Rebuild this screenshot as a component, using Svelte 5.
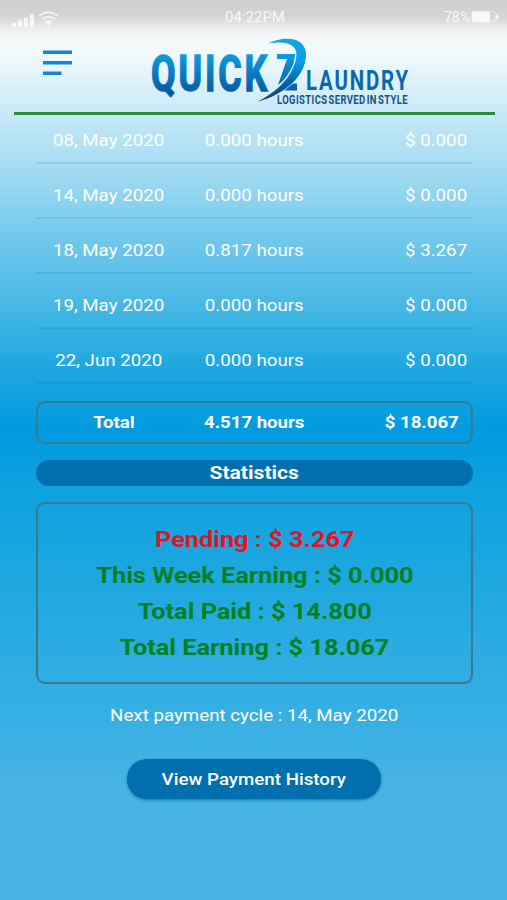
<script>
  let entries = [
    { date: "08, May 2020", hours: "0.000 hours", amount: "$ 0.000" },
    { date: "14, May 2020", hours: "0.000 hours", amount: "$ 0.000" },
    { date: "18, May 2020", hours: "0.817 hours", amount: "$ 3.267" },
    { date: "19, May 2020", hours: "0.000 hours", amount: "$ 0.000" },
    { date: "22, Jun 2020", hours: "0.000 hours", amount: "$ 0.000" },
  ];

  let stats = [
    { label: "Pending", amount: "$ 3.267", pending: true },
    { label: "This Week Earning", amount: "$ 0.000" },
    { label: "Total Paid", amount: "$ 14.800" },
    { label: "Total Earning", amount: "$ 18.067" },
  ];
</script>

<div class="screen">
  <div class="status-bar">
    <div class="signal">
      <svg width="50" height="18" viewBox="0 0 50 18" fill="#fff">
        <path d="M2 14h4v4H2zM8 11.500h4V18H8zM14 8.500h4V18h-4zM20 5h4v13h-4z" />
        <g fill="none" stroke="#fff" stroke-width="2">
          <path d="M29 6.800q9.500-7 19 0" />
          <path d="M32 10.200q6.500-5 13 0" />
          <path d="M35 13.200q3.500-2.600 7 0" />
        </g>
        <path d="M36 14q2.500-1.600 5 0l-2.500 3z" />
      </svg>
    </div>
    <span class="time">04:22PM</span>
    <div class="battery">
      <span>78%</span>
      <svg width="29" height="14" viewBox="0 0 29 14">
        <rect x="1" y="1.500" width="23" height="10.500" rx="2" fill="none" stroke="#fff" stroke-opacity=".7" />
        <rect x="1" y="1.500" width="18" height="10.500" rx="2" fill="#fff" />
        <path d="M25 3.500l3 3.200-3 3.200z" fill="#fff" />
      </svg>
    </div>
  </div>

  <header>
    <button class="menu" aria-label="Menu">
      <svg width="30" height="26" viewBox="0 0 30 26" fill="#1683e2">
        <rect y="0.500" width="29" height="3.500" />
        <rect y="11" width="29" height="3.500" />
        <rect y="21.500" width="18.500" height="3.500" />
      </svg>
    </button>
    <svg class="logo" width="266" height="74" viewBox="0 0 266 74">
      <defs>
        <linearGradient id="brand" gradientUnits="userSpaceOnUse" x1="0" y1="16" x2="0" y2="56">
          <stop offset="0" stop-color="#0b9de0" />
          <stop offset="1" stop-color="#08589d" />
        </linearGradient>
        <linearGradient id="swoosh" gradientUnits="userSpaceOnUse" x1="0" y1="0" x2="0" y2="66">
          <stop offset="0" stop-color="#18a5e0" />
          <stop offset="0.350" stop-color="#05a0e8" />
          <stop offset="0.700" stop-color="#075fa6" />
          <stop offset="1" stop-color="#173a6b" />
        </linearGradient>
      </defs>
      <text
        class="quick"
        x="1"
        y="52.500"
        font-size="50"
        fill="url(#brand)"
        stroke="url(#brand)"
        textLength="119"
        lengthAdjust="spacingAndGlyphs">QUICK</text>
      <path d="M127 16h18q0 9-5 17-5 9-12 14l9-26h-10z" fill="url(#brand)" />
      <path d="M133 52.500l10-7h4v7z" fill="url(#brand)" />
      <path
        d="M118 5.500C135-3 157-1 156 18C155 37 137 56 107 64C127 54 142 39 146 21C149 7 138 2 118 5.500z"
        fill="url(#swoosh)"
        stroke="#eff9fd"
        stroke-width="1.200"
        paint-order="stroke"
      />
      <text
        class="laundry"
        x="156"
        y="52"
        font-size="27"
        textLength="104"
        lengthAdjust="spacingAndGlyphs">LAUNDRY</text>
      <text
        class="tagline"
        x="127"
        y="66"
        font-size="12"
        textLength="131"
        lengthAdjust="spacingAndGlyphs">LOGISTICS SERVED IN STYLE</text>
    </svg>
  </header>

  <main>
    <ul class="entries">
      {#each entries as entry}
        <li>
          <div class="date"><span class="wide">{entry.date}</span></div>
          <div class="hours"><span class="wide">{entry.hours}</span></div>
          <div class="amount"><span class="wide">{entry.amount}</span></div>
        </li>
      {/each}
    </ul>

    <div class="total">
      <div class="label"><span class="wide">Total</span></div>
      <div class="hours"><span class="wide">4.517 hours</span></div>
      <div class="amount"><span class="wide">$ 18.067</span></div>
    </div>

    <h2><span class="wide">Statistics</span></h2>

    <div class="stats">
      {#each stats as stat}
        <p class:pending={stat.pending}>
          <span class="wide">{stat.label} : {stat.amount}</span>
        </p>
      {/each}
    </div>

    <p class="cycle"><span class="wide">Next payment cycle : 14, May 2020</span></p>
    <button class="history"><span class="wide">View Payment History</span></button>
  </main>
</div>

<style>
  :global(body) {
    margin: 0;
  }

  .screen {
    width: 507px;
    height: 900px;
    overflow: hidden;
    font-family: Roboto, "Liberation Sans", sans-serif;
    color: #fff;
    background: linear-gradient(
      #cecece 0,
      #d4d4d4 16px,
      #f6f6f7 34px,
      #f2fafd 52px,
      #c8e9f7 112px,
      #9fdaf1 175px,
      #70c8eb 240px,
      #4bb9e6 300px,
      #22a9e1 360px,
      #009bdf 430px,
      #10a2df 500px,
      #22a9e0 600px,
      #34aee3 700px,
      #46b4e4 790px,
      #48b4e3 900px
    );
  }

  .status-bar {
    display: grid;
    grid-template-columns: 1fr auto 1fr;
    align-items: center;
    height: 34px;
    padding: 0 7px 0 10px;
    box-sizing: border-box;
    font-size: 14px;
  }
  .signal svg {
    display: block;
    margin-top: 1px;
    opacity: 0.75;
  }
  .time {
    font-size: 15px;
    opacity: 0.85;
  }
  .battery {
    display: flex;
    align-items: center;
    justify-content: flex-end;
    gap: 1px;
    opacity: 0.85;
  }

  header {
    display: flex;
    align-items: flex-start;
    height: 78px;
    margin: 0 12px 0 14px;
    border-bottom: 3px solid #2b8a3c;
  }
  button {
    border: 0;
    padding: 0;
    font: inherit;
    color: inherit;
    background: none;
  }
  .menu {
    display: block;
    margin: 16px 0 0 29px;
  }
  .menu svg {
    display: block;
  }
  .logo {
    margin: 4px 0 0 77px;
    overflow: visible;
    font-weight: 700;
  }
  .quick {
    letter-spacing: 4px;
    stroke-width: 1.5px;
  }
  .laundry {
    letter-spacing: 2.5px;
    fill: #0967ad;
  }
  .tagline {
    letter-spacing: 0.5px;
    word-spacing: -2px;
    fill: #15518f;
  }

  main {
    width: 437px;
    margin: 0 auto 0 36px;
    font-size: 16px;
  }
  .wide {
    display: inline-block;
    white-space: nowrap;
    transform: scaleX(1.17);
  }

  .entries {
    list-style: none;
    margin: -6px 0 0;
    padding: 0;
  }
  .entries li,
  .total {
    display: grid;
    grid-template-columns: 145px 147px 1fr;
    align-items: center;
  }
  .entries li {
    height: 55px;
    padding-top: 9px;
    box-sizing: border-box;
    border-bottom: 2px solid rgba(0, 90, 140, 0.12);
  }
  .date,
  .hours {
    text-align: center;
  }
  .amount {
    text-align: right;
    padding-right: 6px;
  }
  .amount .wide {
    transform-origin: right;
  }

  .total {
    height: 43px;
    margin-top: 17px;
    box-sizing: border-box;
    border: 2px solid #3b7894;
    border-radius: 9px;
    font-weight: 700;
  }
  .total .label {
    padding-left: 6px;
    text-align: center;
  }
  .total .hours {
    margin-left: -4px;
  }
  .total .amount {
    padding-right: 12px;
  }
  .total .wide {
    transform: scaleX(1.16);
  }

  h2 {
    height: 26px;
    margin: 16px 0;
    border-radius: 13px;
    background: #006fad;
    font-size: 18px;
    line-height: 26px;
    text-align: center;
  }

  .stats {
    height: 182px;
    padding-top: 18px;
    box-sizing: border-box;
    border: 2px solid #3b7894;
    border-radius: 9px;
    font-size: 22px;
    font-weight: 700;
    line-height: 36px;
    text-align: center;
    color: #008020;
  }
  .stats p {
    margin: 0;
  }
  .stats .pending {
    color: #e5121f;
  }
  .stats .wide {
    transform: scaleX(1.15);
  }

  .cycle {
    margin: 22px 0 33px;
    line-height: 20px;
    text-align: center;
  }
  .history {
    display: block;
    width: 254px;
    height: 40px;
    margin: 0 auto 0 91px;
    border-radius: 20px;
    background: #006fad;
    box-shadow: 0 1px 3px rgba(0, 50, 90, 0.5);
    font-weight: 500;
  }
</style>
